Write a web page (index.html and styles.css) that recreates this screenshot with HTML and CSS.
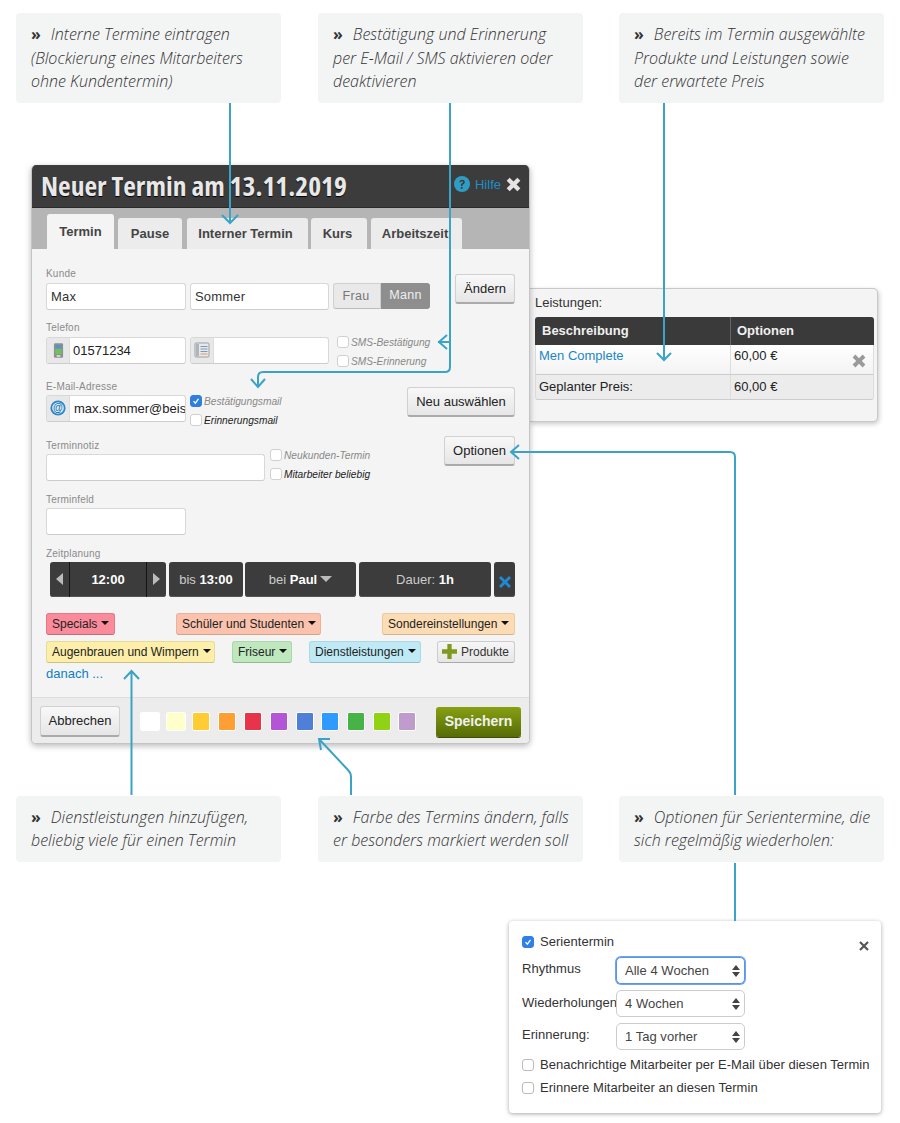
FILE: index.html
```html
<!DOCTYPE html>
<html lang="de">
<head>
<meta charset="utf-8">
<title>Neuer Termin</title>
<link rel="stylesheet" href="styles.css">
</head>
<body>
<div class="page">
  <div class="notes notes-top">
    <div class="note"><b>»</b><i>Interne Termine eintragen<br>(Blockierung eines Mitarbeiters<br>ohne Kundentermin)</i></div>
    <div class="note"><b>»</b><i>Bestätigung und Erinnerung<br>per E-Mail / SMS aktivieren oder<br>deaktivieren</i></div>
    <div class="note"><b>»</b><i>Bereits im Termin ausgewählte<br>Produkte und Leistungen sowie<br>der erwartete Preis</i></div>
  </div>

  <div class="stage">
    <div class="dialog">
      <div class="dlg-head">
        <div class="dlg-title">Neuer Termin am 13.11.2019</div>
        <div class="dlg-tools">
          <svg class="ic-help" viewBox="0 0 16 16"><circle cx="8" cy="8" r="8" fill="#2f9cc4"/><path d="M5.400 6.200C5.500 4.600 6.600 3.700 8.100 3.700c1.600 0 2.700 1 2.700 2.300 0 1.100-.6 1.700-1.400 2.200-.7.5-.9.7-.9 1.400v.3H6.900v-.5c0-1 .4-1.600 1.200-2.100.6-.4.9-.7.9-1.200 0-.5-.4-.9-1-.9s-1 .4-1.100 1zM6.800 11h1.800v1.700H6.800z" fill="#3b3b3b"/></svg>
          <span class="help-txt">Hilfe</span>
          <svg class="ic-x" viewBox="0 0 14 14"><path d="M3.400 .6 7 4.200 10.600 .6 13.400 3.400 9.800 7 13.400 10.600 10.600 13.400 7 9.800 3.400 13.400 .6 10.600 4.200 7 .6 3.400z" fill="#e4e4e4"/></svg>
        </div>
      </div>
      <div class="tabs">
        <div class="tab tab-on">Termin</div>
        <div class="tab t-pause">Pause</div>
        <div class="tab t-int">Interner Termin</div>
        <div class="tab t-kurs">Kurs</div>
        <div class="tab t-arb">Arbeitszeit</div>
      </div>
      <div class="dlg-body">
        <div class="lbl lbl-first">Kunde</div>
        <div class="frow">
          <div class="inp w140">Max</div>
          <div class="inp w139 gap4">Sommer</div>
          <div class="toggle"><span class="tg-off">Frau</span><span class="tg-on">Mann</span></div>
          <div class="btn btn-aendern">Ändern</div>
        </div>

        <div class="lbl lbl-near">Telefon</div>
        <div class="frow">
          <div class="inp w140 addon">
            <span class="add"><svg viewBox="0 0 12 18" class="ic-a"><rect x="1" y="1" width="10" height="16" rx="1.500" fill="#8f8f8f"/><rect x="2.500" y="3" width="7" height="10" fill="#6fc15a"/><rect x="2.500" y="3" width="7" height="4" fill="#5b8fd0"/><rect x="4" y="14" width="4" height="2" fill="#d8d8d8"/></svg></span>
            <span class="addt">01571234</span>
          </div>
          <div class="inp w139 gap4 addon">
            <span class="add"><svg viewBox="0 0 16 16" class="ic-b"><rect x="1" y="1" width="14" height="14" rx="1" fill="#e6eaed" stroke="#9aa0a4"/><rect x="2" y="2" width="3" height="12" fill="#aeb4b8"/><path d="M6.500 4.500h7M6.500 7h7M6.500 9.500h7" stroke="#7c98b8"/><path d="M6.500 12h7" stroke="#e0975a"/></svg></span>
          </div>
          <div class="checks c-sms">
            <div class="chk"><span class="box"></span><em class="mute">SMS-Bestätigung</em></div>
            <div class="chk"><span class="box"></span><em class="mute">SMS-Erinnerung</em></div>
          </div>
        </div>

        <div class="lbl lbl-mail">E-Mail-Adresse</div>
        <div class="frow">
          <div class="inp w140 addon">
            <span class="add"><svg viewBox="0 0 16 16" class="ic-b"><circle cx="8" cy="8" r="7.600" fill="#2b86c9"/><circle cx="8" cy="8" r="5.800" fill="#dff0fa"/><text x="8" y="11.400" text-anchor="middle" class="at">@</text></svg></span>
            <span class="addt clip">max.sommer@beis</span>
          </div>
          <div class="checks c-mail">
            <div class="chk"><span class="box box-on"><svg viewBox="0 0 12 12"><path d="M3 6.200 5.200 8.600 9 3.400" fill="none" stroke="#fff" stroke-width="1.600"/></svg></span><em class="mute">Bestätigungsmail</em></div>
            <div class="chk"><span class="box"></span><em>Erinnerungsmail</em></div>
          </div>
          <div class="btn btn-neu">Neu auswählen</div>
        </div>

        <div class="lbl lbl-far">Terminnotiz</div>
        <div class="frow">
          <div class="inp w219"></div>
          <div class="checks c-note">
            <div class="chk"><span class="box"></span><em class="mute">Neukunden-Termin</em></div>
            <div class="chk"><span class="box"></span><em>Mitarbeiter beliebig</em></div>
          </div>
          <div class="btn btn-opt">Optionen</div>
        </div>

        <div class="lbl lbl-near lbl-low">Terminfeld</div>
        <div class="frow"><div class="inp w140"></div></div>

        <div class="lbl lbl-near lbl-low">Zeitplanung</div>
        <div class="timebar">
          <div class="tb tb-time">
            <span class="tb-arr"><span class="tri-l"></span></span>
            <span class="tb-now">12:00</span>
            <span class="tb-arr"><span class="tri-r"></span></span>
          </div>
          <div class="tb tb-bis">bis&nbsp;<b>13:00</b></div>
          <div class="tb tb-bei">bei&nbsp;<b>Paul</b><span class="tri-d"></span></div>
          <div class="tb tb-dauer">Dauer:&nbsp;<b>1h</b></div>
          <div class="tb tb-x"><svg viewBox="0 0 14 14"><path d="M3 1 7 5 11 1 13 3 9 7 13 11 11 13 7 9 3 13 1 11 5 7 1 3z" fill="#1e8ad6"/></svg></div>
        </div>

        <div class="pills p1">
          <div class="pill red">Specials<span class="care"></span></div>
          <div class="pill salmon">Schüler und Studenten<span class="care"></span></div>
          <div class="pill peach">Sondereinstellungen<span class="care"></span></div>
        </div>
        <div class="pills p2">
          <div class="pill yellow">Augenbrauen und Wimpern<span class="care"></span></div>
          <div class="pill green">Friseur<span class="care"></span></div>
          <div class="pill blue">Dienstleistungen<span class="care"></span></div>
          <div class="pill prod"><svg viewBox="0 0 14 14" class="ic-plus"><path d="M5 0h4v5h5v4H9v5H5V9H0V5h5z" fill="#7f9a1e"/></svg>Produkte</div>
        </div>
        <div class="danach">danach ...</div>
      </div>
      <div class="dlg-foot">
        <div class="btn btn-abb">Abbrechen</div>
        <div class="swatches">
          <span class="sw s1"></span><span class="sw s2"></span><span class="sw s3"></span><span class="sw s4"></span><span class="sw s5"></span><span class="sw s6"></span><span class="sw s7"></span><span class="sw s8"></span><span class="sw s9"></span><span class="sw s10"></span><span class="sw s11"></span>
        </div>
        <div class="btn-save">Speichern</div>
      </div>
    </div>

    <div class="leist">
      <div class="leist-t">Leistungen:</div>
      <div class="l-head"><span class="c1">Beschreibung</span><span class="c2">Optionen</span></div>
      <div class="l-row">
        <span class="c1 lnk">Men Complete</span><span class="c2">60,00 €</span>
        <svg class="ic-lx" viewBox="0 0 14 14"><path d="M3.400 .6 7 4.200 10.600 .6 13.400 3.400 9.800 7 13.400 10.600 10.600 13.400 7 9.800 3.400 13.400 .6 10.600 4.200 7 .6 3.400z" fill="#9a9a9a"/></svg>
      </div>
      <div class="l-sum"><span class="c1">Geplanter Preis:</span><span class="c2">60,00 €</span></div>
    </div>
  </div>

  <div class="notes notes-bot">
    <div class="note"><b>»</b><i>Dienstleistungen hinzufügen,<br>beliebig viele für einen Termin</i></div>
    <div class="note"><b>»</b><i>Farbe des Termins ändern, falls<br>er besonders markiert werden soll</i></div>
    <div class="note"><b>»</b><i>Optionen für Serientermine, die<br>sich regelmäßig wiederholen:</i></div>
  </div>

  <div class="serie">
    <div class="s-row s-head">
      <span class="sbox sbox-on"><svg viewBox="0 0 12 12"><path d="M3 6.200 5.200 8.600 9 3.400" fill="none" stroke="#fff" stroke-width="1.500"/></svg></span>
      <span>Serientermin</span>
      <svg class="s-x" viewBox="0 0 10 10"><path d="M1 1 9 9M9 1 1 9" stroke="#555" stroke-width="2.200" fill="none"/></svg>
    </div>
    <div class="s-sel s-sel1"><span class="s-lab">Rhythmus</span><div class="sel sel-focus">Alle 4 Wochen<span class="updn"></span></div></div>
    <div class="s-sel"><span class="s-lab">Wiederholungen</span><div class="sel">4 Wochen<span class="updn"></span></div></div>
    <div class="s-sel s-sel3"><span class="s-lab">Erinnerung:</span><div class="sel">1 Tag vorher<span class="updn"></span></div></div>
    <div class="s-row s-c1"><span class="sbox"></span><span>Benachrichtige Mitarbeiter per E-Mail über diesen Termin</span></div>
    <div class="s-row s-c2"><span class="sbox"></span><span>Erinnere Mitarbeiter an diesen Termin</span></div>
  </div>

  <svg class="arrows" viewBox="0 0 900 1123">
    <g fill="none" stroke="#3aa3c6" stroke-width="2">
      <path d="M230 103V223M222 215l8 8 8-8"/>
      <path d="M450 103V367q0 5-5 5H263q-5 0-5 5v9M251 379l7 8 7-8"/>
      <path d="M450 342H438M447 335l-8 7 8 7"/>
      <path d="M664 103V360M657 353l7 7 7-7"/>
      <path d="M735 795V457q0-5-5-5H511M519 445l-8 7 8 7"/>
      <path d="M735 863V921"/>
      <path d="M131.500 795V671M124 679l7.500-8 7.500 8"/>
      <path d="M351 795V777q0-4-3-7L319 739M330 739H319L321 750"/>
    </g>
  </svg>
</div>
</body>
</html>
```

FILE: styles.css
```css
* { box-sizing: border-box; }
html, body { margin: 0; padding: 0; background: #fff; }
body { font-family: "Liberation Sans", Arial, sans-serif; color: #222; }
.page { position: relative; width: 900px; height: 1123px; overflow: hidden; }

/* callouts */
.notes { display: flex; padding-left: 16px; }
.notes-top { padding-top: 13px; }
.notes-bot { margin-top: 52px; }
.note {
  flex: none; width: 265px; margin-right: 37px; background: #f3f5f5; border-radius: 4px;
  padding: 10px 5px 9px 15px; font: 300 16px/23.500px "Open Sans", sans-serif; color: #333;
}
.note:nth-child(2) { margin-right: 36px; }
.note b { font-weight: 700; margin-right: 10px; font-style: normal; }
.note i { font-style: italic; }
.notes-bot .note { height: 66px; }

/* dialog */
.stage { display: flex; align-items: flex-start; padding-left: 31px; margin-top: 62px; }
.dialog {
  position: relative; z-index: 2; flex: none; width: 499px; height: 579px; background: #f4f4f4; border-radius: 5px;
  border: 1px solid #c4c4c4; border-top: 0; box-shadow: 0 2px 6px rgba(0,0,0,.28);
  display: flex; flex-direction: column; overflow: hidden;
}
.dlg-head {
  height: 43px; flex: none; background: #3c3c3c; border-bottom: 1px solid #2a2a2a; padding: 0 8px 0 9px;
  display: flex; align-items: center; justify-content: space-between;
}
.dlg-title {
  font: 700 27.500px/1 "Open Sans", sans-serif; font-stretch: 75%; color: #e8e8e8; white-space: nowrap;
  text-shadow: 0 1px 1px #000;
}
.dlg-tools { display: flex; align-items: center; margin-top: -3px; }
.ic-help { width: 16px; height: 16px; margin-right: 5px; }
.help-txt { font-size: 13px; color: #1f8fc7; margin-right: 5px; }
.ic-x { width: 15px; height: 15px; }

.tabs { height: 41px; flex: none; background: #b5b5b5; display: flex; align-items: flex-end; padding-left: 15px; }
.tab {
  height: 31px; background: #ececec; border-radius: 3px 3px 0 0; font-size: 13px; font-weight: 700; color: #444;
  display: flex; align-items: center; justify-content: center; margin-right: 4px; padding-top: 1px; flex: none;
}
.tab-on { width: 67px; height: 35px; background: #f4f4f4; padding-top: 0; }
.t-pause { width: 64px; margin-right: 5px; }
.t-int { width: 121px; margin-right: 3px; padding-right: 4px; }
.t-kurs { width: 56px; padding-right: 3px; }
.t-arb { width: 91px; padding-right: 3px; }

.dlg-body { flex: 1; padding: 0 14px 0 14px; }
.lbl { font-size: 10px; line-height: 14px; height: 16px; color: #8a8a8a; letter-spacing: .2px; }
.lbl-first { margin-top: 18px; }
.lbl-near { margin-top: 11px; }
.lbl-far { margin-top: 16px; line-height: 16px; }
.lbl-mail { margin-top: 15px; line-height: 16px; }
.lbl-low { line-height: 16px; }
.frow { display: flex; align-items: flex-start; height: 27px; }
.inp {
  height: 27px; background: #fff; border: 1px solid #d8d8d8; border-bottom-color: #ccc; border-radius: 3px;
  font-size: 13px; line-height: 25px; padding-left: 4px; color: #333; overflow: hidden; letter-spacing: .2px;
}
.w140 { width: 140px; flex: none; }
.w139 { width: 139px; flex: none; }
.w219 { width: 219px; flex: none; }
.gap4 { margin-left: 4px; }
.addon { display: flex; padding-left: 0; }
.add { width: 23px; flex: none; background: #e8e8e8; border-right: 1px solid #ddd; display: flex; align-items: center; justify-content: center; }
.addt { padding-left: 3px; color: #222; white-space: nowrap; letter-spacing: 0; }
.clip { overflow: hidden; flex: 1; min-width: 0; padding-left: 4px; }
.ic-a { width: 11px; height: 17px; }
.ic-b { width: 16px; height: 16px; }
.at { font: 700 10px "Liberation Sans", sans-serif; fill: #1a6fae; }

.toggle { display: flex; margin-left: 4px; height: 26px; font-size: 12.500px; letter-spacing: .3px; flex: none; }
.tg-off { width: 48px; background: #e9e9e9; color: #777; border: 1px solid #d0d0d0; border-bottom-color: #bbb; border-radius: 3px 0 0 3px; text-align: center; line-height: 24px; padding-right: 2px; }
.tg-on { width: 49px; background: #8e8e8e; color: #eee; border-radius: 0 3px 3px 0; text-align: center; line-height: 25px; }

.btn {
  background: linear-gradient(#f8f8f8, #e6e6e6); border: 1px solid #d0d0d0; border-bottom: 2px solid #aaa; border-radius: 3px;
  font-size: 13px; color: #222; text-align: center; height: 30px; line-height: 28px; white-space: nowrap; flex: none;
}
.btn-aendern { width: 60px; margin: -9px 0 0 auto; }
.btn-neu { width: 108px; margin: -8px 0 0 auto; }
.btn-opt { width: 71px; margin: -18px 0 0 auto; }

.checks { display: flex; flex-direction: column; font-size: 10.200px; }
.chk { display: flex; align-items: center; height: 19px; white-space: nowrap; }
.chk em { color: #222; }
.chk em.mute { color: #888; }
.box { width: 12px; height: 12px; background: #fff; border: 1px solid #d0d0d0; border-radius: 3px; margin-right: 2px; flex: none; display: block; }
.box-on { background: #2f80de; border-color: #2f80de; }
.box-on svg { display: block; width: 10px; height: 10px; }
.c-sms { margin: -4px 0 0 8px; }
.c-mail { margin: -3px 0 0 4px; }
.c-note { margin: -8px 0 0 5px; }

.timebar { display: flex; height: 35px; padding-left: 4px; }
.tb {
  background: #3c3c3c; border-radius: 3px; color: #ccc; font-size: 13px; display: flex; align-items: center; justify-content: center;
  box-shadow: inset 0 -1px 0 #555; flex: none;
}
.tb b { color: #fff; }
.tb-time { width: 116px; justify-content: flex-start; }
.tb-arr { width: 19px; height: 100%; display: flex; align-items: center; justify-content: center; }
.tb-now { width: 78px; height: 100%; color: #fff; font-weight: 700; border-left: 1px solid #151515; border-right: 1px solid #151515; display: flex; align-items: center; justify-content: center; }
.tri-l, .tri-r { width: 0; height: 0; border-top: 6px solid transparent; border-bottom: 6px solid transparent; }
.tri-l { border-right: 7px solid #bbb; }
.tri-r { border-left: 7px solid #bbb; }
.tri-d { width: 0; height: 0; border-left: 6px solid transparent; border-right: 6px solid transparent; border-top: 6px solid #bbb; margin-left: 3px; }
.tb-bis { width: 74px; margin-left: 3px; }
.tb-bei { width: 111px; margin-left: 2px; }
.tb-dauer { width: 132px; margin-left: 3px; }
.tb-x { width: 21px; margin-left: 3px; padding-top: 6px; }
.tb-x svg { width: 14px; height: 14px; }

.pills { display: flex; justify-content: space-between; height: 22px; }
.p1 { margin-top: 16px; }
.p2 { margin-top: 6px; justify-content: flex-start; }
.pill {
  height: 22px; border-radius: 3px; font-size: 12px; line-height: 20px; color: #222; padding: 0 5px;
  border: 1px solid; display: flex; align-items: center; white-space: nowrap;
}
.care { width: 0; height: 0; border-left: 4.500px solid transparent; border-right: 4.500px solid transparent; border-top: 4.500px solid #111; margin-left: 4px; margin-top: -1px; }
.red { background: #f98b9b; border-color: #e4788a; border-bottom-color: #c86a78; }
.salmon { background: #fbc3ae; border-color: #eab29d; border-bottom-color: #d2a08c; }
.peach { background: #fcdcb4; border-color: #ecc99f; border-bottom-color: #d3b48e; }
.yellow { background: #fdefaa; border-color: #e8da98; border-bottom-color: #cdc083; }
.green { background: #bfe8be; border-color: #acd6ab; border-bottom-color: #92ba91; }
.blue { background: #bfeaf5; border-color: #abd8e4; border-bottom-color: #91bcc8; }
.prod { background: linear-gradient(#f6f6f6, #e6e6e6); border-color: #ccc; border-bottom-color: #aaa; color: #333; padding: 0 4px; }
.ic-plus { width: 15px; height: 15px; margin-right: 4px; flex: none; }
.p1 .red { width: 69px; }
.p1 .salmon { width: 145px; }
.p1 .peach { width: 133px; }
.p2 .yellow { width: 169px; }
.p2 .green { width: 60px; margin-left: 17px; }
.p2 .blue { width: 112px; margin-left: 17px; }
.p2 .prod { width: 78px; margin-left: 16px; }
.danach { margin-top: 4px; font-size: 13px; line-height: 14px; color: #0d7fc4; }

.dlg-foot {
  height: 46px; flex: none; background: #ececec; border-top: 1px solid #ddd; display: flex; align-items: center;
  padding: 3px 8px 0 8px;
}
.btn-abb { width: 80px; height: 31px; }
.swatches { display: flex; margin-left: 20px; }
.sw { width: 18px; height: 19px; margin-right: 8px; border: 1px solid #fff; border-radius: 2px; flex: none; }
.s1 { background: #fff; width: 20px; margin-right: 6px; }
.s2 { background: #ffffcc; width: 20px; margin-right: 6px; }
.s3 { background: #ffcc33; }
.s4 { background: #ff9f33; }
.s5 { background: #e8344a; }
.s6 { background: #b455d8; }
.s7 { background: #4f7fd6; margin-right: 7px; }
.s8 { background: #2f9aff; }
.s9 { background: #46b346; }
.s10 { background: #8fd314; margin-right: 7px; }
.s11 { background: #c09ccc; margin-right: 0; }
.btn-save {
  margin-left: auto; width: 85px; height: 30px; border-radius: 3px; background: linear-gradient(#87a012, #566b05);
  color: #f1f1f1; font-size: 14px; font-weight: 700; text-align: center; line-height: 29px; box-shadow: 0 1px 0 #3e4d04;
}

/* Leistungen */
.leist {
  position: relative; z-index: 1; flex: none; width: 348px; height: 134px; margin-top: 123px; background: #f4f4f4; border-radius: 0 5px 5px 0;
  border: 1px solid #c8c8c8; border-left: 0; box-shadow: 1px 2px 5px rgba(0,0,0,.22); padding: 0 4px 0 5px; font-size: 13px;
}
.leist-t { height: 28px; line-height: 27px; color: #333; }
.l-head, .l-row, .l-sum { display: flex; width: 339px; }
.l-head { height: 28px; background: #3a3a3a; color: #f0f0f0; font-weight: 700; border-radius: 3px 3px 0 0; line-height: 28px; }
.l-head .c1 { width: 196px; padding-left: 7px; border-right: 1px solid #666; }
.l-head .c2 { padding-left: 6px; }
.l-row { position: relative; height: 30px; background: linear-gradient(#fff, #f3f3f3); border: 1px solid #ddd; border-top: 0; border-bottom-color: #ccc; line-height: 22px; }
.l-row .c1, .l-sum .c1 { width: 195px; padding-left: 3px; border-right: 1px solid #ddd; }
.l-row .c2, .l-sum .c2 { padding-left: 3px; }
.lnk { color: #1a86c8; }
.ic-lx { position: absolute; right: 7px; top: 9px; width: 14px; height: 14px; }
.l-sum { height: 25px; background: #ececec; border: 1px solid #ddd; border-top: 0; border-bottom-color: #ccc; border-radius: 0 0 3px 3px; line-height: 24px; }

/* Serie */
.serie {
  width: 372px; height: 192px; margin: 59px 0 0 509px; background: #fff; border-radius: 4px; box-shadow: 0 1px 4px rgba(0,0,0,.35);
  padding: 12px 10px 0 13px; font-size: 13px; color: #333; letter-spacing: .03px;
}
.s-row { display: flex; align-items: center; height: 18px; white-space: nowrap; }
.sbox { width: 12px; height: 12px; border: 1px solid #bbb; border-radius: 3px; background: #fff; margin-right: 6px; flex: none; display: block; }
.sbox-on { background: #2f7fe6; border-color: #2f7fe6; }
.sbox-on svg { display: block; width: 10px; height: 10px; }
.s-x { width: 10px; height: 10px; margin: 8px 2px 0 auto; }
.s-sel { display: flex; align-items: center; margin-top: 6px; height: 27px; }
.s-lab { width: 94px; flex: none; white-space: nowrap; margin-top: -2px; }
.s-sel1 .s-lab { margin-top: -4px; }
.s-sel3 .s-lab { margin-top: -4px; }
.sel {
  position: relative; width: 129px; height: 27px; border: 1px solid #ccc; border-radius: 5px; background: #fff; padding-left: 8px; line-height: 25px; color: #444;
}
.sel-focus { border-color: #5a95e8; box-shadow: 0 0 0 1px #6ea4ee; }
.updn { position: absolute; right: 4px; top: 7px; width: 8px; height: 12px; }
.updn::before, .updn::after { content: ""; position: absolute; left: 0; border-left: 4px solid transparent; border-right: 4px solid transparent; }
.updn::before { top: 0; border-bottom: 5px solid #444; }
.updn::after { bottom: 0; border-top: 5px solid #444; }
.s-c1 { margin-top: 6px; }
.s-c2 { margin-top: 5px; }

.arrows { position: absolute; left: 0; top: 0; width: 900px; height: 1123px; z-index: 5; pointer-events: none; }
```
